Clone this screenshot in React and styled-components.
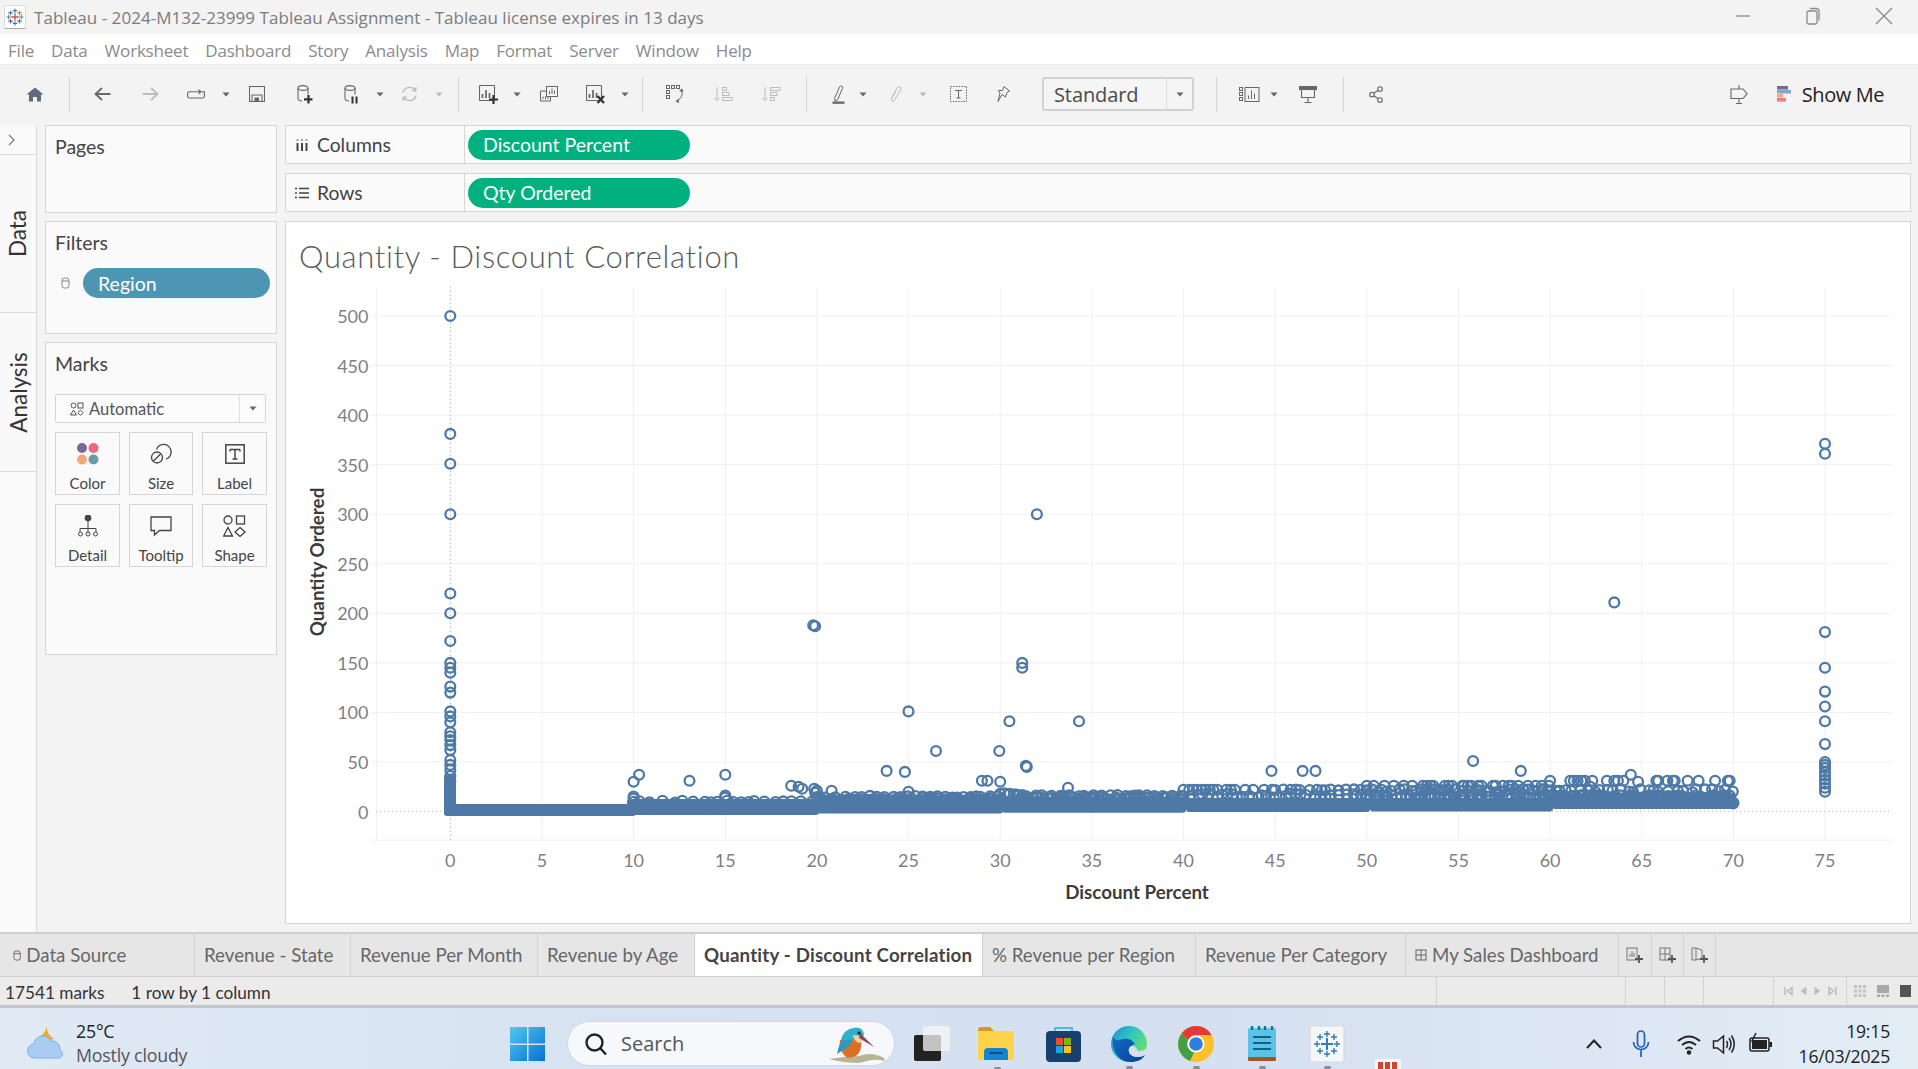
import React from 'react';
import styled, { createGlobalStyle } from 'styled-components';

const Global = createGlobalStyle`
  html, body { margin: 0; padding: 0; background: #f3f3f3; overflow: hidden; }
  * { box-sizing: border-box; }
`;

const Page = styled.div`
  width: 1918px; height: 1069px; display: grid;
  grid-template-rows: 34px 30px 61px 807px 45px 31px 61px;
  font-family: "Lato", "Open Sans", sans-serif; color: #444;
`;
const TitleBar = styled.header`
  display: flex; align-items: center; background: #f3f3f3; position: relative;
`;
const TitleText = styled.div`
  font-family: "Open Sans", sans-serif; font-size: 17px; letter-spacing: 0.04px; color: #7b7b7b; margin-left: 8px; white-space: nowrap;
`;
const LogoBox = styled.div`
  width: 22px; height: 24px; margin-left: 4px; background: #fff; border: 1px solid #dcdcdc; border-bottom-color: #aaa;
  display: flex; align-items: center; justify-content: center;
`;
const WinControls = styled.div`
  margin-left: auto; display: flex; align-items: center; color: #8a8a8a; padding-right: 25px; gap: 53px; padding-bottom: 3px;
`;
const MenuBar = styled.nav`
  background: #fff; display: flex; align-items: center; padding-left: 8px; gap: 17px; padding-top: 2px;
`;
const MenuItem = styled.span`
  font-family: "Open Sans", sans-serif; font-size: 17px; letter-spacing: -0.2px; color: #8b8b8b;
`;
const Toolbar = styled.div`
  background: #f3f3f3; display: flex; align-items: center; border-top: 1px solid #ececec; padding-bottom: 2px;
`;
const ToolSlot = styled.div`
  flex: none; width: ${p => p.$w}px; margin-left: ${p => p.$ml}px; display: flex; align-items: center; justify-content: center;
  color: ${p => (p.$off ? '#bdbdbd' : '#666')};
`;
const ToolSep = styled.div`
  width: 1px; height: 35px; background: #d6d6d6;
`;
const StandardBox = styled.div`
  width: 152px; height: 34px; border: 2px solid #d2d2d2; border-radius: 3px; display: flex; align-items: center; background: #f5f5f5;
  font-family: "Open Sans", sans-serif;
`;
const StandardText = styled.span`
  flex: 1; padding-left: 10px; font-size: 20px; color: #4a4a4a; letter-spacing: -0.1px;
`;
const StandardArrow = styled.span`
  width: 26px; height: 100%; border-left: 1px solid #dcdcdc; display: flex; align-items: center; justify-content: center;
`;
const ShowMeLabel = styled.span`
  font-family: "Open Sans", sans-serif; font-size: 20px; color: #222; letter-spacing: -0.4px; white-space: nowrap;
`;
const Main = styled.main`
  display: flex; background: #f3f3f3; min-height: 0;
`;
const Rail = styled.aside`
  width: 37px; background: #fafafa; border-right: 1px solid #dadada; display: flex; flex-direction: column;
`;
const RailHead = styled.div`
  height: 30px; border-bottom: 1px solid #dadada; display: flex; align-items: center; justify-content: center; color: #777; padding-right: 12px; background: #fafafa;
`;
const RailTab = styled.div`
  height: ${p => p.$h}px; border-bottom: 1px solid #dadada; display: flex; align-items: center; justify-content: center;
  font-size: 22.500px; color: #333; background: #f9f9f9;
  & > span { transform: rotate(-90deg); white-space: nowrap; display: block; }
`;
const Side = styled.section`
  width: 248px; flex: none; padding: 0 8px; display: flex; flex-direction: column; gap: 8px;
`;
const Card = styled.div`
  height: ${p => p.$h}px; background: #fafafa; border: 1px solid #d5d5d5; padding: 8px 9px 0;
`;
const CardTitle = styled.div`
  font-size: 19.500px; color: #444; line-height: 26px;
`;
const FilterRow = styled.div`
  display: flex; align-items: center; margin: 12px -3px 0 6px; gap: 13px; color: #888;
`;
const Pill = styled.div`
  flex: ${p => (p.$w ? 'none' : 1)}; width: ${p => (p.$w ? `${p.$w}px` : 'auto')}; height: 30px; border-radius: 15px; background: ${p => p.$bg};
  color: #fff; font-size: 19.500px; display: flex; align-items: center; padding-left: ${p => p.$pl}px; margin-left: ${p => p.$ml || 0}px;
`;
const MarkSelect = styled.div`
  margin-top: 17px; height: 29px; width: 211px; background: #fbfbfb; border: 1px solid #d5d5d5; border-radius: 2px; display: flex; align-items: center;
  color: #555;
`;
const MarkSelectLabel = styled.div`
  flex: 1; display: flex; align-items: center; gap: 5px; padding-left: 14px; font-size: 16.500px;
`;
const MarkSelectArrow = styled.div`
  width: 26px; height: 100%; border-left: 1px solid #e0e0e0; display: flex; align-items: center; justify-content: center;
`;
const MarkGrid = styled.div`
  margin-top: 9px; width: 212px; display: grid; grid-template-columns: 65px 64px 65px; column-gap: 9px; row-gap: 9px;
`;
const MarkBtn = styled.div`
  height: 63px; border: 1px solid #d5d5d5; display: flex; flex-direction: column; align-items: center; padding-top: 10px; color: #444;
  & > svg { flex: none; height: 22px; }
  & > span { font-size: 15px; margin-top: 10px; line-height: 16px; color: #444; }
`;
const Content = styled.section`
  width: 1626px; flex: none; display: flex; flex-direction: column; gap: 9px; height: 799px;
`;
const Shelf = styled.div`
  height: 39px; background: #fafafa; border: 1px solid #d5d5d5; display: flex; align-items: center;
`;
const ShelfHead = styled.div`
  width: 179px; height: 100%; border-right: 1px solid #d5d5d5; display: flex; align-items: center; gap: 8px; padding-left: 9px; font-size: 19.300px; color: #444; flex: none;
`;
const View = styled.div`
  flex: 1; min-height: 0; background: #fff; border: 1px solid #d5d5d5; display: flex; flex-direction: column;
`;
const ViewTitle = styled.h1`
  margin: 0; height: 57px; padding: 16px 0 0 13px; font-family: "Lato", sans-serif; font-weight: 300; font-size: 31px; line-height: 36px; letter-spacing: 0.65px; color: #5a5a5a; flex: none;
`;
const ChartSvg = styled.svg`
  display: block; flex: none;
  text { font-family: "Lato", sans-serif; }
`;
const Tabs = styled.div`
  display: flex; background: #e6e6e6; border-top: 2px solid #cfcfcf; border-bottom: 1px solid #d2d2d2;
`;
const Tab = styled.div`
  flex: none; width: ${p => p.$w}px; padding-left: ${p => p.$pl ?? 9}px; display: flex; align-items: center; gap: 5px; white-space: nowrap;
  border-right: 1px solid #d2d2d2; font-size: 18.700px; color: ${p => (p.$on ? '#444' : '#666')}; background: ${p => (p.$on ? '#fff' : 'transparent')};
  font-weight: ${p => (p.$on ? 700 : 400)}; letter-spacing: ${p => (p.$on ? '0.2px' : '0')};
`;
const IconTab = styled(Tab)`
  justify-content: center; padding-left: 0; color: #777;
`;
const Status = styled.div`
  display: flex; background: #ebebeb; align-items: stretch; border-bottom: 3px solid #c3c6cb;
`;
const StatusLeft = styled.div`
  flex: none; width: 1436px; display: flex; align-items: center; gap: 27px; padding: 2px 0 0 5px; font-size: 17.200px; color: #333; white-space: nowrap;
`;
const StatusCell = styled.div`
  flex: none; width: ${p => p.$w}px; border-left: 1px solid #d2d2d2; display: flex; align-items: center; justify-content: center; gap: ${p => p.$g || 0}px; color: #bbb;
`;
const Taskbar = styled.footer`
  display: flex; align-items: center; position: relative; overflow: hidden; padding-top: 10px;
  background: linear-gradient(90deg, #dfeaf5 0%, #d8e3f2 30%, #d4dff0 60%, #e3edf6 100%);
  font-family: "Open Sans", sans-serif; color: #333;
`;
const Weather = styled.div`
  width: 510px; flex: none; padding-left: 27px; display: flex; align-items: center; gap: 11px; margin-top: -1px;
`;
const WeatherText = styled.div`
  display: flex; flex-direction: column; font-size: 17.800px; line-height: 24px; letter-spacing: -0.2px;
  & > b { font-weight: 400; color: #222; }
  & > span { color: #555; }
`;
const SearchBox = styled.div`
  flex: none; margin-left: 21px; width: 328px; height: 45px; border-radius: 23px; background: #f6f8fc; border: 1px solid #d0d8e6; display: flex; align-items: center; padding-left: 16px; gap: 13px;
  font-size: 20px; color: #555; position: relative;
`;
const Bird = styled.div`
  position: absolute; right: 9px; top: 4px; display: flex;
`;
const TaskIcon = styled.div`
  flex: none; margin-left: ${p => p.$ml}px; position: relative; display: flex;
  ${p => p.$dot ? `&::after { content: ""; position: absolute; left: 50%; top: 40px; width: 7px; height: 3px; margin-left: -3px; background: #8c8c8c; border-radius: 2px; }` : ''}
`;
const PeekIcon = styled.div`
  position: absolute; left: 1375px; top: 51px; width: 26px; height: 14px; background: #f7f7f7; border-radius: 2px; display: flex; gap: 2px; padding: 3px 3px 0;
  & > i { width: 5px; height: 7px; background: #d2452d; display: block; }
`;
const Tray = styled.div`
  display: flex; align-items: center; color: #222;
`;
const Clock = styled.div`
  margin-left: auto; padding-right: 28px; text-align: right; font-size: 17.600px; line-height: 25px; color: #222; letter-spacing: -0.2px;
`;

/* ---------- icons ---------- */
const Ic = ({ w = 22, h = 22, vb, children, sw = 1.3 }) => (
  <svg width={w} height={h} viewBox={vb || `0 0 ${w} ${h}`} fill="none" stroke="currentColor" strokeWidth={sw}>{children}</svg>
);
const Caret = () => (<svg width="8" height="5" viewBox="0 0 8 5"><path d="M0.5 0.5h7L4 4.5z" fill="#666" /></svg>);
const CaretOff = () => (<svg width="8" height="5" viewBox="0 0 8 5"><path d="M0.5 0.5h7L4 4.5z" fill="#bbb" /></svg>);

const TabLogo = ({ s = 18, c = '#3f7fb5' }) => {
  const cross = (x, y, r, col, sw = 1.4) => <path key={`${x}${y}`} d={`M${x - r} ${y}h${2 * r}M${x} ${y - r}v${2 * r}`} stroke={col} strokeWidth={sw} />;
  return (
    <svg width={s} height={s} viewBox="0 0 24 24" fill="none">
      {cross(12, 12, 5, '#c9553f', 1.8)}
      {cross(12, 3.5, 3, c)}{cross(12, 20.5, 3, c)}{cross(3.5, 12, 3, '#59879b')}{cross(20.5, 12, 3, '#59879b')}
      {cross(6, 6.5, 3, c)}{cross(18, 6.5, 3, '#e8762c')}{cross(6, 17.5, 3, '#5b6591')}{cross(18, 17.5, 3, c)}
    </svg>
  );
};
const Home = () => <svg width="18" height="15" viewBox="0 0 18 15"><path d="M9 0.500L0.500 7.500h2.500v7h4v-4.500h4v4.500h4v-7h2.500z" fill="#5f6b7d" /></svg>;
const Back = ({ off }) => <Ic w={17} h={14} sw={1.8}>{off ? <path d="M0.500 7H15M9 1l6.500 6-6.500 6" /> : <path d="M16.500 7H2M8 1L1.500 7 8 13" />}</Ic>;
const Loop = () => <Ic w={18} h={10} sw={1.1}><path d="M11 2.700H2.500Q0.600 2.700 0.600 4.500v2.700Q0.600 9 2.500 9h13Q17.400 9 17.400 7.200V2.700H15" /><path d="M11.500 0l3.500 2.700-3.500 2.700z" fill="currentColor" stroke="none" /></Ic>;
const Save = () => <Ic w={16} h={16} sw={1.1}><rect x="0.500" y="0.500" width="15" height="15" /><path d="M3 15.500V9h10v6.500" /><rect x="5.500" y="11.500" width="4.500" height="4" fill="currentColor" stroke="none" /></Ic>;
const Cyl = ({ plus, pause }) => (
  <Ic w={16} h={19} sw={1.1}>
    <ellipse cx="6" cy="3" rx="5" ry="2.400" />
    <path d="M1 3v10.500q0 2 4 2.500M11 3v6.500" />
    {plus && <path d="M11.500 10v8.500M7 14.300h8.500" stroke="#333" strokeWidth="2.200" />}
    {pause && <path d="M8.500 11.500v7M12.500 11.500v7" stroke="#333" strokeWidth="2" />}
  </Ic>
);
const Refresh = () => (
  <Ic w={17} h={16} sw={1.4}>
    <path d="M2 6.500a6.800 6.800 0 0 1 11.500-3M15 9.500a6.800 6.800 0 0 1-11.500 3" />
    <path d="M15.500 0.500v5h-5zM1.500 15.500v-5h5z" fill="currentColor" stroke="none" />
  </Ic>
);
const Sheet = ({ mark }) => (
  <Ic w={20} h={19} sw={1.1}>
    <rect x="0.500" y="0.500" width="15" height="15" rx="0.800" />
    <path d="M3.500 13V9M7 13V5M10.500 13V8" strokeWidth="1.700" />
    {mark === 'plus' && <path d="M14.500 10v9M10 14.500h9" stroke="#333" strokeWidth="2.200" />}
    {mark === 'x' && <path d="M11.500 11l6.500 7M18 11l-6.500 7" stroke="#333" strokeWidth="2.400" />}
  </Ic>
);
const Dup = () => <Ic w={18} h={16} sw={1}><rect x="6.500" y="0.500" width="11" height="10" /><path d="M9.500 8V5M12 8V2.500M14.500 8V4.500M6.500 5H0.500v10h10v-4.500M3 13v-2.500M5.500 13v-2.500M8 13v-2.500" /></Ic>;
const Swap = () => (
  <Ic w={18} h={18} sw={1}>
    {[0.500, 5.500, 10.500].map(x => <rect key={x} x={x} y="0.500" width="3" height="3" />)}
    {[5.500, 10.500].map(y => <rect key={y} x="0.500" y={y} width="3" height="3" />)}
    <path d="M15.500 6q2.500 5.500-4.500 10" />
    <path d="M13 6l3-2.500 1.500 3.500zM12.500 13.500l-3 3 3.500 1.500z" fill="currentColor" stroke="none" />
  </Ic>
);
const SortA = () => <Ic w={19} h={15} sw={1}><path d="M3 0v12M0.500 10.500L3 14l2.500-3.500" /><rect x="8.500" y="0.500" width="4" height="3" /><rect x="8.500" y="5.500" width="6.500" height="3" /><rect x="8.500" y="10.500" width="9.500" height="3" /></Ic>;
const SortD = () => <Ic w={19} h={15} sw={1}><path d="M3 0v12M0.500 10.500L3 14l2.500-3.500" /><rect x="8.500" y="0.500" width="9.500" height="3" /><rect x="8.500" y="5.500" width="6.500" height="3" /><rect x="8.500" y="10.500" width="4" height="3" /></Ic>;
const Pen = () => (
  <Ic w={13} h={19} sw={1}><path d="M2.500 13.500L7.500 2q1-1.700 2.300-1t0.700 2.300L5.500 15 3 16z" /><rect x="0.500" y="16.500" width="12" height="2.300" fill="#666" stroke="none" /></Ic>
);
const Clip = () => <Ic w={13} h={16} sw={1}><path d="M2 13L8 2q1.500-2 3-1t0.500 3L5.500 14q-1 2-2.500 1.300T2.500 12.500L7 5" /></Ic>;
const TextBox = () => <Ic w={17} h={16} sw={1}><rect x="0.500" y="0.500" width="16" height="15" strokeDasharray="1.500 1.200" /><path d="M5 4.500h7M8.500 4.500v7.500M6.500 12h4" /></Ic>;
const PinI = () => <Ic w={13} h={16} sw={1}><path d="M7 0.500l5.500 4.500-2.500 1.500L8.500 11 5 8.500 1 15.500l2-8.500L1.500 4.500 5.500 4.500z" /></Ic>;
const VizSize = () => <Ic w={21} h={15} sw={1}><rect x="0.500" y="0.500" width="3" height="3" /><rect x="0.500" y="5.500" width="3" height="3" /><rect x="0.500" y="10.500" width="3" height="3" /><rect x="6" y="0.500" width="14" height="14" /><path d="M9.500 12V8.500M12.500 12V3.500M15.500 12V6.500" /></Ic>;
const Present = () => <Ic w={18} h={17} sw={1.100}><rect x="0.500" y="0.500" width="17" height="3" fill="#666" /><path d="M2.500 3.500v8h13v-8M9 11.500v5M5.500 16.500h7" /></Ic>;
const Share = () => <Ic w={15} h={17} sw={1.100}><circle cx="11" cy="3" r="2.300" /><circle cx="3" cy="8.500" r="2.300" /><circle cx="11" cy="14" r="2.300" /><path d="M5 7l4-2.500M5 10l4 2.500" /></Ic>;
const Presenter = () => <Ic w={18} h={19} sw={1.100}><path d="M9 0v4M9 13.500V18.500M6 18.500h6" /><path d="M1 4h12l4 4.700-4 4.800H1z" /></Ic>;
const ShowBars = () => (
  <svg width="14" height="16" viewBox="0 0 14 16">
    <rect x="0" y="0" width="11" height="3.500" fill="#7b6791" /><rect x="0" y="4" width="14" height="3.500" fill="#7fa8cf" />
    <rect x="0" y="8" width="6" height="3.500" fill="#f5a877" /><rect x="0" y="12" width="9" height="3.500" fill="#f0788a" />
  </svg>
);
const Columns3 = () => <Ic w={14} h={14} sw={2}><path d="M2.500 5v8M7 5v8M11.500 5v8" /><path d="M2.500 1.500v1M7 1.500v1M11.500 1.500v1" /></Ic>;
const RowsI = () => <Ic w={14} h={12} sw={1.700}><path d="M0 1.500h2M4 1.500h10M0 6h2M4 6h10M0 10.500h2M4 10.500h10" /></Ic>;
const CylSmall = ({ s = 12 }) => <svg width={s * 0.75} height={s} viewBox="0 0 9 12" fill="none" stroke="currentColor"><rect x="1" y="1" width="7" height="10" rx="2.500" /><path d="M1 4h7" /></svg>;
const ShapesSmall = () => <Ic w={14} h={14} sw={1}><circle cx="3.500" cy="3.500" r="2.500" /><rect x="8" y="1" width="5" height="5" /><path d="M3.500 8l3 5H.5zM10.500 8l2.700 2.700-2.700 2.700-2.700-2.700z" /></Ic>;

const ColorI = () => (
  <svg width="22" height="22" viewBox="0 0 22 22">
    <circle cx="5" cy="5" r="5" fill="#7b6791" /><circle cx="16.500" cy="5" r="5" fill="#f0687e" /><circle cx="5" cy="16.500" r="5" fill="#f4a77b" /><circle cx="16.500" cy="16.500" r="5" fill="#6b9bab" />
  </svg>
);
const SizeI = () => <Ic w={22} h={22} sw={1.300}><path d="M6.500 6.500a7.500 7.500 0 1 1 9.500 9.500" /><circle cx="7" cy="14.500" r="5.500" /><path d="M3.500 18l7-7" /></Ic>;
const LabelI = () => <Ic w={20} h={20} sw={1.500}><rect x="0.800" y="0.800" width="18.400" height="18.400" /><path d="M5 5.500h10M10 5.500v9.500M7.500 15h5M5 5.500v2M15 5.500v2" /></Ic>;
const DetailI = () => (
  <svg width="20" height="22" viewBox="0 0 20 22" fill="none" stroke="#444"><circle cx="10" cy="3" r="3" fill="#444" /><path d="M10 6v12M2 17v-3.500h16V17" /><circle cx="2.500" cy="19" r="2" /><circle cx="10" cy="19" r="2" /><circle cx="17.500" cy="19" r="2" /></svg>
);
const TooltipI = () => <Ic w={22} h={20} sw={1.300}><path d="M1 1h20v13.500H9.500L4.500 19v-4.500H1z" /></Ic>;
const ShapeI = () => <Ic w={23} h={22} sw={1.300}><circle cx="5" cy="5" r="4" /><rect x="13.500" y="1" width="8" height="8" /><path d="M5 12.500l4.500 8.500H0.700zM17 12.500l5 4.500-5 4.500-5-4.500z" /></Ic>;

const BoardI = () => <Ic w={12} h={14} sw={1}><rect x="1" y="2" width="10" height="10" /><path d="M6 2v10M1 7h10" /></Ic>;
const NewSheetTab = () => <Ic w={18} h={18} sw={1}><rect x="1" y="2" width="10" height="12" /><path d="M4 11V8M6 11V5M8 11V7" /><path d="M13 9v8M9 13h8" stroke="#555" strokeWidth="1.800" /></Ic>;
const NewBoardTab = () => <Ic w={18} h={18} sw={1}><rect x="1" y="2" width="10" height="12" /><path d="M6 2v12M1 8h10" /><path d="M13 9v8M9 13h8" stroke="#555" strokeWidth="1.800" /></Ic>;
const NewStoryTab = () => <Ic w={18} h={18} sw={1}><path d="M1 2h4v12H1zM5 2l6 2v8l-6 2" /><path d="M13 9v8M9 13h8" stroke="#555" strokeWidth="1.800" /></Ic>;

const Win = () => (
  <svg width="36" height="36" viewBox="0 0 36 36">
    <defs><linearGradient id="wg" x1="0" y1="0" x2="1" y2="1"><stop offset="0" stopColor="#4fc8f5" /><stop offset="1" stopColor="#0a6fd0" /></linearGradient></defs>
    <path d="M0 1h17v16.500H0zM18.500 1H35v16.500H18.500zM0 19h17v16H0zM18.500 19H35v16H18.500z" fill="url(#wg)" />
  </svg>
);
const WeatherI = () => (
  <svg width="38" height="36" viewBox="0 0 38 36">
    <path d="M20 1q-1 8 7 13-9 3-14-3 5-2 7-10z" fill="#f5a623" />
    <path d="M8 33a7 7 0 0 1-1-14 9 9 0 0 1 17-3 8 8 0 0 1 9 8.500 5 5 0 0 1 0 8.500z" fill="#a9cdf2" stroke="#7fb0e4" />
  </svg>
);
const KingFisher = () => (
  <svg width="56" height="37" viewBox="0 0 56 37">
    <path d="M0 33q12-2 30-3 12-5 25 2l1 3q-8-2-14-1-8 2-12 3-16 0-30-4z" fill="#b9b594" />
    <path d="M11 14q-2 10 6 17 8 2 13-4 4-8 1-15z" fill="#dc6f24" />
    <path d="M8 28q2-12 9-18 6-1 6 4-1 6-7 9z" fill="#2a9ac4" />
    <path d="M12 14q2-10 12-12 9-2 11 6-1 5-8 6-8 0-15 0z" fill="#2fb0cc" />
    <path d="M24 9q1 7 7 8 3-2 2-7z" fill="#f2d3a6" />
    <path d="M31 7l14 14-15-9z" fill="#8a4a55" />
    <circle cx="30" cy="7" r="1.500" fill="#1a1a2a" />
  </svg>
);
const TaskView = () => (
  <svg width="36" height="35" viewBox="0 0 36 35">
    <rect x="0" y="9" width="27" height="26" rx="2" fill="#222" />
    <rect x="9" y="0" width="27" height="25" rx="2" fill="#f5f5f5" opacity="0.760" />
  </svg>
);
const Folder = () => (
  <svg width="37" height="34" viewBox="0 0 37 34">
    <path d="M0 3q0-3 3-3h9l4 4H0z" fill="#d39a12" />
    <rect x="0" y="4" width="36" height="29" rx="2" fill="#ffd24a" />
    <path d="M6 33v-8q0-4 4-4h16q4 0 4 4v8z" fill="#1483d0" />
    <rect x="11" y="25" width="14" height="2" rx="1" fill="#0b4f8c" />
  </svg>
);
const Store = () => (
  <svg width="35" height="36" viewBox="0 0 35 36">
    <path d="M9 7V2h17v5" fill="none" stroke="#4fb8ea" strokeWidth="1.800" />
    <rect x="0" y="5" width="35" height="31" rx="4" fill="#17406f" />
    <rect x="10" y="12" width="7" height="7" fill="#e8512d" /><rect x="18" y="12" width="7" height="7" fill="#7ab51d" />
    <rect x="10" y="20" width="7" height="7" fill="#0ea5e9" /><rect x="18" y="20" width="7" height="7" fill="#fbbf24" />
  </svg>
);
const Edge = () => (
  <svg width="36" height="36" viewBox="0 0 36 36">
    <defs>
      <linearGradient id="eg" x1="0" y1="0" x2="1" y2="0.600"><stop offset="0" stopColor="#1f8fd8" /><stop offset="0.500" stopColor="#2fc4c0" /><stop offset="1" stopColor="#6be06a" /></linearGradient>
      <linearGradient id="eb" x1="0" y1="0" x2="1" y2="1"><stop offset="0" stopColor="#0f6cc4" /><stop offset="1" stopColor="#0b3f94" /></linearGradient>
    </defs>
    <circle cx="18" cy="18" r="18" fill="url(#eg)" />
    <path d="M2 11C0 22 6 36 20 36c6 0 11-2 14-7-5 3-14 3-16-3-1-4 2-7 6-8-3-5-8-6-12-5-4 1-7 3-10-2z" fill="url(#eb)" />
    <path d="M36 21c-1 3-5 4-9 4-1-3-3-5-5-5-3 0-5 2-4 6 2 6 11 6 16 3 1-2 2-5 2-8z" fill="#d5dff0" />
  </svg>
);
const Chrome = () => (
  <svg width="36" height="36" viewBox="0 0 36 36">
    <circle cx="18" cy="18" r="18" fill="#fbc02d" />
    <path d="M18 0a18 18 0 0 1 15.600 9H18a9 9 0 0 0-8 5L3.500 7.500A18 18 0 0 1 18 0z" fill="#e53935" />
    <path d="M3.500 7.500L10 14a9 9 0 0 0 6 12.500L12 35A18 18 0 0 1 3.500 7.500z" fill="#43a047" />
    <circle cx="18" cy="18" r="8.500" fill="#fff" /><circle cx="18" cy="18" r="6.800" fill="#2f7fe0" />
  </svg>
);
const Notepad = () => (
  <svg width="28" height="36" viewBox="0 0 28 36">
    <rect x="0" y="2" width="28" height="31" rx="2" fill="#5cc3e8" /><rect x="0" y="31" width="28" height="4" rx="1" fill="#a9541e" />
    <path d="M4 0v4M11 0v4M17 0v4M24 0v4" stroke="#1f6c8f" strokeWidth="2.400" />
    <path d="M5 11h18M5 17h18M5 23h18" stroke="#155f83" strokeWidth="2" />
  </svg>
);
const TableauApp = () => (
  <svg width="36" height="36" viewBox="0 0 36 36"><rect x="1" width="34" height="36" rx="2" fill="#f6f7f8" stroke="#cfd3d8" /><g transform="translate(5,5)"><TabLogoInner /></g></svg>
);
function TabLogoInner() {
  const c = '#2f7fb5';
  const l = [[13, 13, 6], [13, 3, 3], [13, 23, 3], [3, 13, 3], [23, 13, 3], [6, 6, 3], [20, 6, 3], [6, 20, 3], [20, 20, 3]];
  return <>{l.map(([x, y, r]) => <path key={`${x}-${y}`} d={`M${x - r} ${y}h${2 * r}M${x} ${y - r}v${2 * r}`} stroke={c} strokeWidth={r > 3 ? 2 : 1.400} fill="none" />)}</>;
}
const Mic = () => <Ic w={18} h={28} sw={1.700}><rect x="5.500" y="1" width="7" height="16" rx="3.500" stroke="#1f5fbf" /><path d="M1.500 12a7.500 7.500 0 0 0 15 0M9 20v7" stroke="#1f5fbf" /></Ic>;
const Wifi = () => <Ic w={24} h={22} sw={1.900}><path d="M1 8q11-9 22 0M5 12q7-6 14 0M8.500 16q3.500-3 7 0" /><circle cx="12" cy="19.500" r="1.300" fill="currentColor" /></Ic>;
const Vol = () => <Ic w={24} h={24} sw={1.500}><path d="M1.500 9h4l6-5v17l-6-5h-4z" /><path d="M14.500 9q2 3 0 7M17 6q4 6 0 12M19.500 3.500q5.500 9 0 17" /></Ic>;
const Batt = () => <svg width="24" height="24" viewBox="0 0 24 24" fill="none"><rect x="1" y="6" width="19" height="13" rx="2" stroke="#222" strokeWidth="1.500" /><rect x="3" y="8" width="15" height="9" fill="#222" /><rect x="20.500" y="10" width="2.500" height="5" fill="#222" /><path d="M7 1L3 9h4l-2 6" stroke="#222" strokeWidth="1.500" /></svg>;
const MagIcon = () => <Ic w={24} h={24} sw={2.400}><circle cx="10.500" cy="10.500" r="8" stroke="#222" /><path d="M16 16l6 6.500" stroke="#222" /></Ic>;

/* ---------- scatter data ---------- */
function makeRand(seed) {
  let a = seed;
  return () => {
    a |= 0; a = (a + 0x6d2b79f5) | 0;
    let t = Math.imul(a ^ (a >>> 15), 1 | a);
    t = (t + Math.imul(t ^ (t >>> 7), 61 | t)) ^ t;
    return ((t ^ (t >>> 14)) >>> 0) / 4294967296;
  };
}
const X = d => 450.300 + d * 18.330;
const Y = q => 811.500 - q * 0.991;

const OUTLIERS = [
  [0, 500], [0, 381], [0, 351], [0, 300], [0, 220], [0, 200], [0, 172], [0, 150], [0, 145], [0, 140], [0, 126], [0, 120],
  [0, 101], [0, 96], [0, 90], [0, 80], [0, 76], [0, 72], [0, 67], [0, 62], [0, 52], [0, 47], [0, 42], [0, 36], [0, 30],
  [19.800, 188], [19.900, 187], [25, 101], [26.500, 61], [29.950, 61], [30.500, 91], [34.300, 91], [32, 300], [31.200, 150], [31.200, 145],
  [31.400, 46], [31.450, 45], [63.500, 211], [75, 371], [75, 361], [75, 181], [75, 145], [75, 121], [75, 106], [75, 91], [75, 68],
  [75, 50], [75, 47], [75, 44], [75, 40], [75, 36], [75, 32], [75, 28], [75, 24], [75, 20],
  [55.800, 51], [58.400, 41], [44.800, 41], [46.500, 41], [47.200, 41], [23.800, 41], [24.800, 40], [10.300, 37], [10, 30], [13.050, 31],
  [15, 37], [18.600, 26], [19, 25], [19.200, 23], [19.850, 23], [20, 21], [19.900, 19], [20.800, 21], [29, 31], [29.300, 31], [30, 30],
  [33.700, 24], [25, 20], [10, 15], [10, 13], [15, 16], [15, 14], [60, 31], [64.400, 37], [64.800, 30], [55.300, 26],
  [69.700, 31], [69.800, 31], [65.800, 31], [65.900, 31], [67.500, 31], [68.100, 31], [69, 31], [66.400, 31], [66.700, 31], [66.800, 31],
  [63.100, 31], [63.500, 31], [63.700, 31], [64, 31], [62.300, 31], [61.100, 31], [61.300, 31], [61.700, 31], [61.900, 31], [61.500, 31],
  [60.500, 21], [62.200, 25], [69.800, 16], [69.400, 16],
];
function scatter() {
  const r = makeRand(77);
  const pts = OUTLIERS.slice();
  const row = (from, to, q, jitter, minStep, maxStep) => {
    let x = from;
    while (x < to) {
      pts.push([x, q + (r() - 0.500) * jitter]);
      x += minStep + r() * (maxStep - minStep);
    }
  };
  row(10, 20, 10, 2, 0.300, 0.800);
  row(20, 30, 15, 2, 0.200, 0.600);
  row(20, 30, 12, 3, 0.100, 0.300);
  row(30, 31, 18, 3, 0.100, 0.250);
  row(31, 40, 16, 1.500, 0.200, 0.550);
  row(31, 40, 13, 3, 0.100, 0.250);
  row(40, 45, 22, 0, 0.150, 0.600);
  row(45, 50, 22, 1.500, 0.150, 0.550);
  row(40, 50, 16, 4, 0.150, 0.450);
  row(50, 60, 26, 0, 0.150, 0.650);
  row(50, 60, 21, 3, 0.150, 0.450);
  row(50, 60, 15, 3, 0.100, 0.300);
  row(60, 70, 21, 3, 0.180, 0.550);
  row(60, 70, 15, 3, 0.080, 0.250);
  row(60, 70, 11, 3, 0.060, 0.160);
  return pts;
}
const BAND = [
  [444, 636, 804, 816], [444, 456, 775, 812], [627, 819, 799, 815], [816, 1003, 796, 813.500], [1002, 1186, 797, 812.700],
  [1186, 1370, 798, 812], [1370, 1553, 798, 811.500], [1552, 1733, 796, 809],
];

const Chart = () => {
  const xs = Array.from({ length: 16 }, (_, i) => i * 5);
  const ys = Array.from({ length: 11 }, (_, i) => i * 50);
  const pts = React.useMemo(scatter, []);
  return (
    <ChartSvg width="1624" height="645" viewBox="286 279 1624 645">
      <g stroke="#f0f0f0" strokeWidth="1">
        <path d="M376.500 287V840" />
        {xs.map(v => <path key={v} d={`M${X(v)} 287V840`} />)}
        {ys.filter(v => v > 0).map(v => <path key={v} d={`M372 ${Y(v)}H1892`} />)}
        <path d="M372 840H1892" />
      </g>
      <g stroke="#bbb" strokeDasharray="1 3" strokeWidth="1">
        <path d="M450.500 287V840" />
        <path d="M376 811.500H1892" />
      </g>
      <g fill="#4e79a7">
        {BAND.map(([a, b, t, u], i) => <rect key={i} x={a} y={t} width={b - a} height={u - t} rx="3" />)}
        <circle cx="1733" cy="803" r="6.500" />
      </g>
      <g fill="none" stroke="#4e79a7" strokeWidth="2.300">
        {pts.map(([d, q], i) => <circle key={i} cx={X(d).toFixed(1)} cy={Y(q).toFixed(1)} r="4.900" />)}
      </g>
      <g fill="#7f7f7f" fontSize="18" textAnchor="end">
        {ys.map(v => <text key={v} x="368.500" y={Y(v) + 7}>{v}</text>)}
      </g>
      <g fill="#7f7f7f" fontSize="18" textAnchor="middle">
        {xs.map(v => <text key={v} x={X(v)} y="867">{v}</text>)}
      </g>
      <text x="1137" y="899" textAnchor="middle" fontSize="18.800" fontWeight="700" fill="#3c3c3c">Discount Percent</text>
      <text transform="translate(324,562) rotate(-90)" textAnchor="middle" fontSize="18.800" fontWeight="700" fill="#3c3c3c">Quantity Ordered</text>
    </ChartSvg>
  );
};

/* ---------- toolbar data ---------- */
const TOOLS = [
  { c: 35, w: 18, el: <Home /> },
  { c: 69, w: 1, el: <ToolSep /> },
  { c: 102, w: 17, el: <Back /> },
  { c: 150, w: 17, off: true, el: <Back off /> },
  { c: 196, w: 18, el: <Loop /> },
  { c: 225.500, w: 8, el: <Caret /> },
  { c: 257, w: 16, el: <Save /> },
  { c: 305, w: 16, el: <Cyl plus /> },
  { c: 352, w: 16, el: <Cyl pause /> },
  { c: 380, w: 8, el: <Caret /> },
  { c: 409, w: 17, off: true, el: <Refresh /> },
  { c: 439, w: 8, el: <CaretOff /> },
  { c: 458, w: 1, el: <ToolSep /> },
  { c: 489, w: 20, el: <Sheet mark="plus" /> },
  { c: 517, w: 8, el: <Caret /> },
  { c: 549, w: 18, el: <Dup /> },
  { c: 596, w: 20, el: <Sheet mark="x" /> },
  { c: 624.500, w: 8, el: <Caret /> },
  { c: 642, w: 1, el: <ToolSep /> },
  { c: 675, w: 18, el: <Swap /> },
  { c: 723, w: 19, off: true, el: <SortA /> },
  { c: 771, w: 19, off: true, el: <SortD /> },
  { c: 806, w: 1, el: <ToolSep /> },
  { c: 838, w: 13, el: <Pen /> },
  { c: 863, w: 8, el: <Caret /> },
  { c: 895, w: 13, off: true, el: <Clip /> },
  { c: 923, w: 8, el: <CaretOff /> },
  { c: 958, w: 17, el: <TextBox /> },
  { c: 1003, w: 13, el: <PinI /> },
  { c: 1118, w: 152, el: (
    <StandardBox>
      <StandardText>Standard</StandardText>
      <StandardArrow><Caret /></StandardArrow>
    </StandardBox>
  ) },
  { c: 1216, w: 1, el: <ToolSep /> },
  { c: 1249, w: 21, el: <VizSize /> },
  { c: 1274, w: 8, el: <Caret /> },
  { c: 1308, w: 18, el: <Present /> },
  { c: 1343, w: 1, el: <ToolSep /> },
  { c: 1376, w: 15, el: <Share /> },
  { c: 1739, w: 18, el: <Presenter /> },
  { c: 1784, w: 14, el: <ShowBars /> },
  { c: 1843, w: 86, el: <ShowMeLabel>Show Me</ShowMeLabel> },
];
function placedTools() {
  let prev = 0;
  return TOOLS.map(t => {
    const ml = t.c - t.w / 2 - prev;
    prev = t.c + t.w / 2;
    return { ...t, ml };
  });
}

const MENUS = ['File', 'Data', 'Worksheet', 'Dashboard', 'Story', 'Analysis', 'Map', 'Format', 'Server', 'Window', 'Help'];
const MARKS = [
  ['Color', <ColorI key="c" />], ['Size', <SizeI key="s" />], ['Label', <LabelI key="l" />],
  ['Detail', <DetailI key="d" />], ['Tooltip', <TooltipI key="t" />], ['Shape', <ShapeI key="h" />],
];
const TABS = [
  { t: 'Revenue - State', w: 156 }, { t: 'Revenue Per Month', w: 187 }, { t: 'Revenue by Age', w: 157 },
  { t: 'Quantity - Discount Correlation', w: 288, on: true }, { t: '% Revenue per Region', w: 213 }, { t: 'Revenue Per Category', w: 210 },
];

export default function App() {
  return (
    <Page>
      <Global />
      <TitleBar>
        <LogoBox><TabLogo s={18} /></LogoBox>
        <TitleText>Tableau - 2024-M132-23999 Tableau Assignment - Tableau license expires in 13 days</TitleText>
        <WinControls>
          <Ic w={16} h={16}><path d="M1 8h14" /></Ic>
          <Ic w={18} h={18}><rect x="3" y="4" width="10" height="13" rx="1.500" /><path d="M6 1.500h6q3 0 3 3v9" /></Ic>
          <Ic w={18} h={18}><path d="M1 1l16 16M17 1L1 17" /></Ic>
        </WinControls>
      </TitleBar>
      <MenuBar>{MENUS.map(m => <MenuItem key={m}>{m}</MenuItem>)}</MenuBar>
      <Toolbar>
        {placedTools().map((t, i) => (
          <ToolSlot key={i} $w={t.w} $ml={t.ml} $off={t.off}>{t.el}</ToolSlot>
        ))}
      </Toolbar>
      <Main>
        <Rail>
          <RailHead><Ic w={10} h={14} sw={1.200}><path d="M2 2l5 5-5 5" /></Ic></RailHead>
          <RailTab $h={158}><span>Data</span></RailTab>
          <RailTab $h={159}><span>Analysis</span></RailTab>
        </Rail>
        <Side>
          <Card $h={88}><CardTitle>Pages</CardTitle></Card>
          <Card $h={113}>
            <CardTitle>Filters</CardTitle>
            <FilterRow>
              <CylSmall />
              <Pill $bg="#4c95b3" $pl={15}>Region</Pill>
            </FilterRow>
          </Card>
          <Card $h={313}>
            <CardTitle>Marks</CardTitle>
            <MarkSelect>
              <MarkSelectLabel><ShapesSmall />Automatic</MarkSelectLabel>
              <MarkSelectArrow><Caret /></MarkSelectArrow>
            </MarkSelect>
            <MarkGrid>
              {MARKS.map(([label, icon]) => (
                <MarkBtn key={label}>{icon}<span>{label}</span></MarkBtn>
              ))}
            </MarkGrid>
          </Card>
        </Side>
        <Content>
          <Shelf>
            <ShelfHead><Columns3 />Columns</ShelfHead>
            <Pill $w={222} $bg="#00b180" $pl={15} $ml={3}>Discount Percent</Pill>
          </Shelf>
          <Shelf>
            <ShelfHead><RowsI />Rows</ShelfHead>
            <Pill $w={222} $bg="#00b180" $pl={15} $ml={3}>Qty Ordered</Pill>
          </Shelf>
          <View>
            <ViewTitle>Quantity - Discount Correlation</ViewTitle>
            <Chart />
          </View>
        </Content>
      </Main>
      <Tabs>
        <Tab $w={195} $pl={13}><CylSmall s={11} />Data Source</Tab>
        {TABS.map(t => <Tab key={t.t} $w={t.w} $on={t.on}>{t.t}</Tab>)}
        <Tab $w={213} $pl={9}><BoardI />My Sales Dashboard</Tab>
        <IconTab $w={33} $pl={0}><NewSheetTab /></IconTab>
        <IconTab $w={32} $pl={0}><NewBoardTab /></IconTab>
        <IconTab $w={32} $pl={0}><NewStoryTab /></IconTab>
      </Tabs>
      <Status>
        <StatusLeft><span>17541 marks</span><span>1 row by 1 column</span></StatusLeft>
        <StatusCell $w={189} />
        <StatusCell $w={39} />
        <StatusCell $w={39} />
        <StatusCell $w={70} />
        <StatusCell $w={73} $g={7}>
          <Ic w={9} h={10} sw={1.500}><path d="M1 1v8M8 1.500L3.500 5 8 8.500z" /></Ic>
          <Ic w={7} h={10} sw={1}><path d="M6 1.500L1.500 5 6 8.500z" fill="currentColor" /></Ic>
          <Ic w={7} h={10} sw={1}><path d="M1 1.500L5.500 5 1 8.500z" fill="currentColor" /></Ic>
          <Ic w={9} h={10} sw={1.500}><path d="M8 1v8M1 1.500L5.500 5 1 8.500z" /></Ic>
        </StatusCell>
        <StatusCell $w={72} $g={11}>
          <svg width="12" height="12" viewBox="0 0 12 12" fill="#c4c4c4"><path d="M0 0h3v3H0zM4.500 0h3v3h-3zM9 0h3v3H9zM0 4.500h3v3H0zM4.500 4.500h3v3h-3zM9 4.500h3v3H9zM0 9h3v3H0zM4.500 9h3v3h-3zM9 9h3v3H9z" /></svg>
          <svg width="12" height="12" viewBox="0 0 12 12" fill="#a8a8a8"><path d="M0 0h12v8H0zM0 9.500h3V12H0zM4.500 9.500h3V12h-3zM9 9.500h3V12H9z" /></svg>
          <svg width="11" height="12" viewBox="0 0 11 12" fill="#555"><path d="M0 0h11v12H0z" /></svg>
        </StatusCell>
      </Status>
      <Taskbar>
        <Weather>
          <WeatherI />
          <WeatherText><b>25°C</b><span>Mostly cloudy</span></WeatherText>
        </Weather>
        <Win />
        <SearchBox>
          <MagIcon />Search
          <Bird><KingFisher /></Bird>
        </SearchBox>
        <TaskIcon $ml={19}><TaskView /></TaskIcon>
        <TaskIcon $ml={28} $dot><Folder /></TaskIcon>
        <TaskIcon $ml={31}><Store /></TaskIcon>
        <TaskIcon $ml={30} $dot><Edge /></TaskIcon>
        <TaskIcon $ml={31} $dot><Chrome /></TaskIcon>
        <TaskIcon $ml={34} $dot><Notepad /></TaskIcon>
        <TaskIcon $ml={33} $dot><TableauApp /></TaskIcon>
        <PeekIcon><i /><i /><i /></PeekIcon>
        <Tray>
          <TaskIcon $ml={240}><Ic w={18} h={12} sw={2}><path d="M2 10l7-7.500 7 7.500" /></Ic></TaskIcon>
          <TaskIcon $ml={29}><Mic /></TaskIcon>
          <TaskIcon $ml={27}><Wifi /></TaskIcon>
          <TaskIcon $ml={11}><Vol /></TaskIcon>
          <TaskIcon $ml={13}><Batt /></TaskIcon>
        </Tray>
        <Clock>19:15<br />16/03/2025</Clock>
      </Taskbar>
    </Page>
  );
}
